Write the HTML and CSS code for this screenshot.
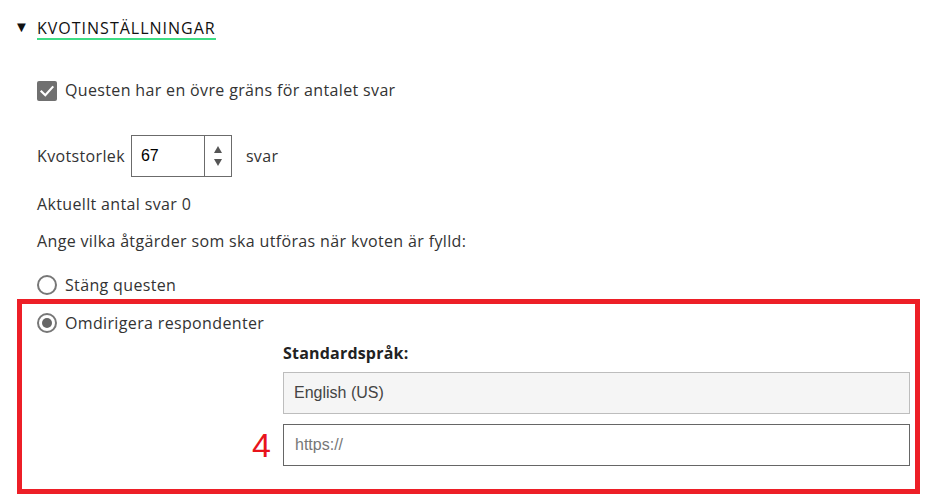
FILE: index.html
```html
<!DOCTYPE html>
<html lang="sv">
<head>
<meta charset="utf-8">
<link rel="stylesheet" href="styles.css">
</head>
<body>
<div class="page">
  <div class="head">
    <span class="tri">▼</span>
    <span class="title">KVOTINSTÄLLNINGAR</span>
  </div>
  <div class="opts">
    <label class="check-row">
      <span class="checkbox"><svg width="20" height="20" viewBox="0 0 20 20"><path d="M4.5 10.5 L8.3 14.2 L15.5 6.2" fill="none" stroke="#fff" stroke-width="2.2" stroke-linecap="square"/></svg></span>
      <span>Questen har en övre gräns för antalet svar</span>
    </label>
    <div class="size-row">
      <span>Kvotstorlek</span>
      <span class="num">
        <span class="num-val">67</span>
        <span class="spin"><span class="up"></span><span class="down"></span></span>
      </span>
      <span class="unit">svar</span>
    </div>
    <p class="line current">Aktuellt antal svar 0</p>
    <p class="line ask">Ange vilka åtgärder som ska utföras när kvoten är fylld:</p>
    <label class="radio-row first"><span class="radio"></span><span>Stäng questen</span></label>
  </div>
  <div class="redbox">
    <label class="radio-row"><span class="radio on"></span><span>Omdirigera respondenter</span></label>
    <div class="redirect">
      <div class="lang-label">Standardspråk:</div>
      <div class="select">English (US)</div>
      <div class="url-row">
        <span class="step">4</span>
        <div class="url">https://</div>
      </div>
    </div>
  </div>
</div>
</body>
</html>
```
FILE: styles.css
```css
html, body { margin: 0; padding: 0; background: #fff; }
body { font-family: "Open Sans", "Liberation Sans", sans-serif; color: #333; font-size: 16px; letter-spacing: 0.35px; }
.page { width: 925px; height: 497px; overflow: hidden; }
.head { display: flex; align-items: flex-end; height: 40px; padding-left: 14px; }
.tri { font-size: 15px; color: #111; width: 23px; line-height: 16px; padding-bottom: 6px; letter-spacing: 0; }
.title { font-size: 16px; color: #111; letter-spacing: 1px; line-height: 20px; border-bottom: 2px solid #3ddc84; height: 20px; }
.opts { padding-left: 37px; }
.check-row { display: flex; align-items: center; margin-top: 41px; height: 20px; gap: 8px; }
.check-row > span:last-child { margin-top: -2px; }
.checkbox { width: 20px; height: 20px; background: #707070; border-radius: 2px; display: block; }
.checkbox svg { display: block; }
.size-row { display: flex; align-items: center; margin-top: 34px; height: 42px; }
.num { display: flex; width: 99px; height: 40px; border: 1px solid #6b6b6b; margin-left: 6px; }
.num-val { flex: 1; font-family: "Liberation Sans", Arial, sans-serif; font-size: 16px; color: #000; padding-left: 9px; line-height: 40px; letter-spacing: 0; }
.spin { width: 26px; border-left: 1px solid #6b6b6b; display: flex; flex-direction: column; align-items: center; justify-content: center; gap: 6px; }
.up { width: 0; height: 0; border-left: 4px solid transparent; border-right: 4px solid transparent; border-bottom: 7px solid #555; }
.down { width: 0; height: 0; border-left: 4px solid transparent; border-right: 4px solid transparent; border-top: 7px solid #555; }
.unit { margin-left: 14px; }
.line { margin: 0; line-height: 20px; }
.current { margin-top: 17px; }
.ask { margin-top: 17px; }
.radio-row { display: flex; align-items: center; gap: 8px; height: 20px; }
.radio-row.first { margin-top: 24px; }
.radio { width: 16px; height: 16px; border: 2px solid #777; border-radius: 50%; display: block; position: relative; box-sizing: content-box; }
.radio.on::after { content: ""; position: absolute; left: 3px; top: 3px; width: 10px; height: 10px; border-radius: 50%; background: #666; }
.redbox { margin: 4px 0 0 17px; border: 5px solid #ed1f27; padding-top: 9px; box-sizing: border-box; height: 195px; width: 903px; }
.redbox .radio-row { padding-left: 15px; }
.redirect { margin-left: 261px; margin-right: 5px; }
.lang-label { font-weight: 700; margin-top: 10px; line-height: 20px; color: #222; letter-spacing: 0.2px; }
.select { margin-top: 9px; height: 40px; border: 1px solid #bdbdbd; background: #f5f5f5; font-family: "Liberation Sans", Arial, sans-serif; font-size: 16px; color: #444; line-height: 40px; padding-left: 10px; letter-spacing: 0; }
.url-row { position: relative; margin-top: 10px; }
.url { height: 40px; border: 1px solid #666; font-family: "Liberation Sans", Arial, sans-serif; font-size: 16px; color: #777; line-height: 40px; padding-left: 11px; letter-spacing: 0; }
.step { position: absolute; left: -31px; top: 3px; font-family: "Liberation Sans", Arial, sans-serif; font-size: 34px; color: #e8141c; line-height: 36px; letter-spacing: 0; }
```
